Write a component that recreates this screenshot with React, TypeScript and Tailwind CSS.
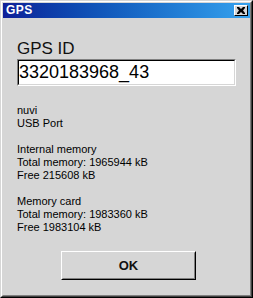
export default function App() {
  const lines: (string | null)[] = [
    "nuvi",
    "USB Port",
    null,
    "Internal memory",
    "Total memory: 1965944 kB",
    "Free 215608 kB",
    null,
    "Memory card",
    "Total memory: 1983360 kB",
    "Free 1983104 kB",
  ];

  return (
    <div className="h-[298px] w-[253px] bg-[#d6d6d6] font-['Liberation_Sans',Arial,sans-serif]">
      {/* window frame, 3px classic bevel */}
      <div className="h-full w-full border border-t-[#d6d6d6] border-l-[#d6d6d6] border-r-black border-b-black">
        <div className="h-full w-full border border-t-white border-l-white border-r-[#404040] border-b-[#404040]">
          <div className="flex h-full w-full flex-col border border-t-[#d6d6d6] border-l-[#d6d6d6] border-r-[#808080] border-b-[#808080]">
            {/* title bar */}
            <div className="flex h-[15px] shrink-0 items-center justify-between bg-gradient-to-r from-[#0f1f98] to-[#36a2ee] pl-[3px] pr-[2px]">
              <span className="text-[12px] leading-[15px] font-bold tracking-[0.5px] text-white">GPS</span>
              <div className="flex h-[11px] w-[14px] items-center justify-center border border-t-white border-l-white border-r-black border-b-black bg-[#d6d6d6]">
                <svg width="8" height="7" viewBox="0 0 8 7" className="block">
                  <path d="M0 0h2l2 2 2-2h2v1L6 3.5 8 6v1H6L4 5 2 7H0V6l2-2.5L0 1z" fill="#000" />
                </svg>
              </div>
            </div>

            {/* body */}
            <div className="flex flex-col px-[14px] pt-[21px]">
              <div className="text-[17px] leading-[20px] text-[#111]">GPS ID</div>
              <div className="h-[27px] w-[219px] border border-t-[#808080] border-l-[#808080] border-r-white border-b-white">
                <div className="h-full w-full border border-t-black border-l-black border-r-[#d6d6d6] border-b-[#d6d6d6] bg-white">
                  <div className="text-[18px] leading-[23px] text-black">3320183968_43</div>
                </div>
              </div>

              <div className="mt-[18px] flex flex-col text-[11px] leading-[13px] text-black">
                {lines.map((l, i) =>
                  l ? (
                    <div key={i}>{l}</div>
                  ) : (
                    <div key={i} className="h-[13px]" />
                  )
                )}
              </div>

              <button className="mt-[17px] ml-[44px] h-[29px] w-[135px] border border-t-white border-l-white border-r-black border-b-black bg-[#d6d6d6] p-0">
                <div className="flex h-full w-full items-center justify-center border border-t-[#d6d6d6] border-l-[#d6d6d6] border-r-[#808080] border-b-[#808080] text-[13px] font-bold text-[#111]">
                  OK
                </div>
              </button>
            </div>
          </div>
        </div>
      </div>
    </div>
  );
}
